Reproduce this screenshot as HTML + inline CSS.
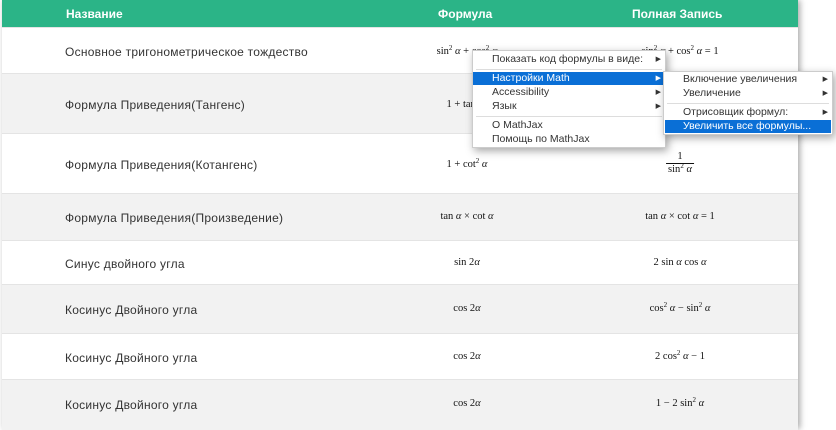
<!DOCTYPE html>
<html><head><meta charset="utf-8"><style>
body{margin:0;width:836px;height:429px;overflow:hidden;background:#fff;font-family:"Liberation Sans",sans-serif;position:relative}
.tbl{position:absolute;left:2px;top:0;width:796px;height:429px;box-shadow:2px 0 6px rgba(0,0,0,.35);background:#fff}
.hd{position:absolute;left:0;top:0;width:796px;height:27px;background:#2bb487;color:#fff;font-weight:bold;font-size:12px}
.hd span{position:absolute;top:7px}
.row{position:absolute;left:0;width:796px;border-top:1px solid #e4e4e4}
.g{background:#f2f2f2}
.nm{position:absolute;left:63px;font-size:12px;letter-spacing:0.25px;color:#333;margin-top:1px}
.f{position:absolute;font-family:"Liberation Serif",serif;font-size:10.5px;color:#111;transform:translateX(-50%);white-space:nowrap}
.f i{font-style:italic}
sup{font-size:7px;vertical-align:4px;line-height:0}
.menu{position:absolute;background:#fff;border:1px solid #ccc;box-shadow:2px 3px 8px rgba(0,0,0,.35);font-size:10.5px;color:#333}
.it{position:absolute;left:0;right:0;height:13px;line-height:13px;padding-left:19px}
.it.sel{background:#0a6fd6;color:#fff}
.ar{position:absolute;right:4px;font-size:7px}
.sep{position:absolute;left:3px;right:3px;border-top:1px solid #ddd}
</style></head><body>
<div class="tbl">
<div class="hd"><span style="left:64px">Название</span><span style="left:436px">Формула</span><span style="left:630px">Полная Запись</span></div>
<div class="row" style="top:27px;height:46px"><div class="nm" style="top:16px">Основное тригонометрическое тождество</div><div class="f" style="left:465px;top:18px">sin<sup>2</sup> <i>α</i> + cos<sup>2</sup> <i>α</i></div><div class="f" style="left:678px;top:18px">sin<sup>2</sup> <i>α</i> + cos<sup>2</sup> <i>α</i> = 1</div></div>
<div class="row g" style="top:73px;height:60px"><div class="nm" style="top:23px">Формула Приведения(Тангенс)</div><div class="f" style="left:465px;top:25px">1 + tan<sup>2</sup> <i>α</i></div></div>
<div class="row" style="top:133px;height:60px"><div class="nm" style="top:23px">Формула Приведения(Котангенс)</div><div class="f" style="left:465px;top:25px">1 + cot<sup>2</sup> <i>α</i></div><div class="f" style="left:678px;top:16px;text-align:center;line-height:13px">1<br><span style="border-top:1px solid #111;padding:0 2px">sin<sup>2</sup> <i>α</i></span></div></div>
<div class="row g" style="top:193px;height:47px"><div class="nm" style="top:16px">Формула Приведения(Произведение)</div><div class="f" style="left:465px;top:17px">tan <i>α</i> × cot <i>α</i></div><div class="f" style="left:678px;top:17px">tan <i>α</i> × cot <i>α</i> = 1</div></div>
<div class="row" style="top:240px;height:44px"><div class="nm" style="top:15px">Синус двойного угла</div><div class="f" style="left:465px;top:16px">sin 2<i>α</i></div><div class="f" style="left:678px;top:16px">2 sin <i>α</i> cos <i>α</i></div></div>
<div class="row g" style="top:284px;height:49px"><div class="nm" style="top:17px">Косинус Двойного угла</div><div class="f" style="left:465px;top:18px">cos 2<i>α</i></div><div class="f" style="left:678px;top:18px">cos<sup>2</sup> <i>α</i> − sin<sup>2</sup> <i>α</i></div></div>
<div class="row" style="top:333px;height:46px"><div class="nm" style="top:16px">Косинус Двойного угла</div><div class="f" style="left:465px;top:17px">cos 2<i>α</i></div><div class="f" style="left:678px;top:17px">2 cos<sup>2</sup> <i>α</i> − 1</div></div>
<div class="row g" style="top:379px;height:50px"><div class="nm" style="top:17px">Косинус Двойного угла</div><div class="f" style="left:465px;top:18px">cos 2<i>α</i></div><div class="f" style="left:678px;top:18px">1 − 2 sin<sup>2</sup> <i>α</i></div></div>
</div>
<div class="menu" style="left:472px;top:50px;width:192px;height:96px">
<div class="it" style="top:2px">Показать код формулы в виде:<span class="ar">▶</span></div>
<div class="sep" style="top:18px"></div>
<div class="it sel" style="top:21px">Настройки Math<span class="ar">▶</span></div>
<div class="it" style="top:35px">Accessibility<span class="ar">▶</span></div>
<div class="it" style="top:49px">Язык<span class="ar">▶</span></div>
<div class="sep" style="top:65px"></div>
<div class="it" style="top:68px">О MathJax</div>
<div class="it" style="top:82px">Помощь по MathJax</div>
</div>
<div class="menu" style="left:663px;top:71px;width:168px;height:62px">
<div class="it" style="top:1px">Включение увеличения<span class="ar">▶</span></div>
<div class="it" style="top:15px">Увеличение<span class="ar">▶</span></div>
<div class="sep" style="top:31px"></div>
<div class="it" style="top:34px">Отрисовщик формул:<span class="ar">▶</span></div>
<div class="it sel" style="top:48px;right:1px;left:1px;padding-left:18px">Увеличить все формулы...</div>
</div>
</body></html>
